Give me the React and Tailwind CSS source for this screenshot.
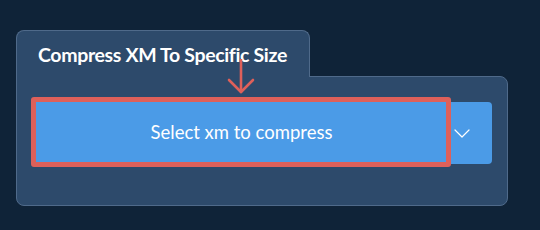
export default function App() {
  return (
    <div className="h-[230px] w-[540px] bg-[#0f2338] pl-4 pt-[30px] font-['Lato',sans-serif]">
      <div className="relative w-[492px]">
        <div className="relative z-10 -mb-px flex h-[47px] w-[294px] items-start rounded-t-lg border border-b-0 border-[#4f6a8a] bg-[#2d4a6b] pl-[21px] pt-[14px]">
          <h1 className="text-[19.5px] leading-none font-bold tracking-[-0.35px] text-white">
            Compress XM To Specific Size
          </h1>
        </div>
        <div className="h-[130px] rounded-b-lg rounded-tr-lg border border-[#4f6a8a] bg-[#2d4a6b] px-[15px] pt-[25px]">
          <div className="relative flex h-[62px] rounded-[4px] bg-[#4b9be7]">
            <button className="flex h-full w-[419px] items-center justify-center pb-px text-[18.5px] text-white">
              Select xm to compress
            </button>
            <div className="flex flex-1 items-center pl-[3px]">
              <svg width="16" height="9" viewBox="0 0 16 9" fill="none" stroke="white" strokeWidth="1.2" strokeLinecap="round" strokeLinejoin="round">
                <path d="M1 1 L8 8 L15 1" />
              </svg>
            </div>
            <div className="pointer-events-none absolute -left-px -top-[5px] h-[70px] w-[420px] rounded-[3px] border-[5px] border-[#de605a]" />
          </div>
        </div>
        <svg
          className="pointer-events-none absolute left-[211px] top-[29px] z-20"
          width="28"
          height="36"
          viewBox="0 0 28 36"
          fill="none"
          stroke="#de605a"
          strokeWidth="2.6"
          strokeLinecap="round"
          strokeLinejoin="round"
        >
          <path d="M14 1 V33" />
          <path d="M2 21 L14 33 L26 21" />
        </svg>
      </div>
    </div>
  );
}
